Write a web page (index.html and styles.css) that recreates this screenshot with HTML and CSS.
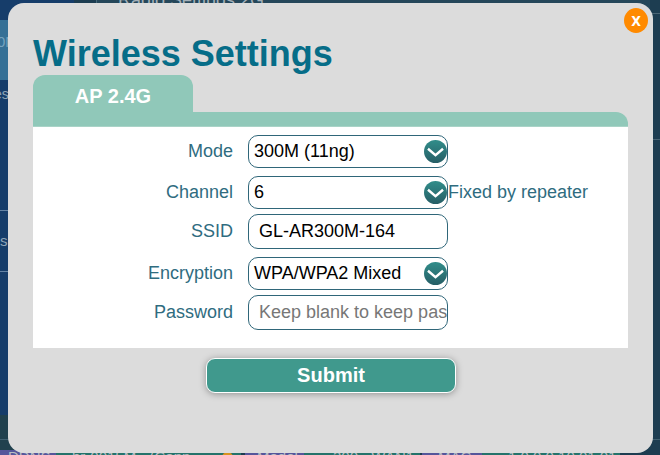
FILE: index.html
```html
<!DOCTYPE html>
<html lang="en">
<head>
<meta charset="utf-8">
<title>Wireless Settings</title>
<link rel="stylesheet" href="styles.css">
</head>
<body>
<div class="page">
  <div class="main">
    <nav class="sidebar">
      <div class="nav-gap"></div>
      <div class="nav-item active">0N</div>
      <div class="nav-item tall">es</div>
      <div class="nav-item ruled">s</div>
    </nav>
    <div class="radio"><span>Radio Settings 2G</span></div>
    <div class="rail"><i></i><i></i><i></i></div>
  </div>
  <div class="spacer"></div>
  <footer class="status">
    <span class="tag first">DDNS</span><span class="value connection">br-0015M - (Conn</span><span class="dot-cell"><i class="dot"></i></span>
    <span class="tag model">Model</span><span class="value device">300 - WAN1</span>
    <span class="tag mac">MAC</span><span class="value address">1.0.0.0 10.01.01</span>
  </footer>
</div>

<section class="modal">
  <button class="close" type="button">X</button>
  <h1>Wireless Settings</h1>
  <div class="tab">AP 2.4G</div>
  <div class="tab-bar"></div>
  <form class="panel">
    <div class="row"><span class="label">Mode</span><div class="field select">300M (11ng)<svg class="arrow" viewBox="0 0 22 22"><use href="#chevron"/></svg></div></div>
    <div class="row channel"><span class="label">Channel</span><div class="field select">6<svg class="arrow" viewBox="0 0 22 22"><use href="#chevron"/></svg></div><span class="note">Fixed by repeater</span></div>
    <div class="row text-row"><span class="label">SSID</span><div class="field text">GL-AR300M-164</div></div>
    <div class="row encryption"><span class="label">Encryption</span><div class="field select">WPA/WPA2 Mixed<svg class="arrow" viewBox="0 0 22 22"><use href="#chevron"/></svg></div></div>
    <div class="row text-row"><span class="label">Password</span><div class="field text placeholder">Keep blank to keep password</div></div>
  </form>
  <button class="submit" type="button">Submit</button>
</section>

<svg class="defs" width="0" height="0">
  <defs>
    <linearGradient id="disc" x1="0" y1="0" x2="0" y2="1"><stop offset="0" stop-color="#318d8a"/><stop offset="1" stop-color="#265e66"/></linearGradient>
    <symbol id="chevron" viewBox="0 0 22 22"><circle cx="11" cy="11" r="11" fill="url(#disc)"/><path d="M3.8 8.4L11 14.6L18.2 8.4" fill="none" stroke="#fff" stroke-width="2.3"/></symbol>
  </defs>
</svg>
</body>
</html>
```
FILE: styles.css
```css
* { box-sizing: border-box; }
body {
  margin: 0;
  height: 455px;
  overflow: hidden;
  font-family: "Liberation Sans", Arial, sans-serif;
  background: #1d3d51;
}
.page { height: 455px; display: flex; flex-direction: column; overflow: hidden; }
.main { height: 415px; display: flex; }
.sidebar { width: 74px; background: #163d6a; color: #8fa5b8; font-size: 15px; overflow: hidden; }
.nav-gap { height: 20px; }
.nav-item { height: 60px; padding-top: 13px; text-indent: 0; }
.nav-item.active { background: #357096; color: #76a3bf; text-indent: -3px; }
.nav-item.tall { height: 130px; padding-top: 6px; font-size: 14px; text-indent: -6px; }
.nav-item.ruled { height: 62px; padding-top: 21px; border-top: 1px solid #6584a5; border-bottom: 1px solid #6584a5; }
.radio {
  flex: 1;
  margin-left: 22px;
  padding-left: 21px;
  border-left: 1px solid #47697a;
  background: #25475a;
  color: #a3b0b8;
  font-size: 18px;
  line-height: 20px;
}
.radio span { display: block; margin-top: -10px; }
.rail { width: 10px; padding-top: 13px; background: #1d3d51; }
.rail i { display: block; height: 126px; border-top: 1px solid #4a6575; }
.rail i:last-child { margin-top: 158px; height: 1px; }
.spacer { height: 35px; background: linear-gradient(#416171, #416171) 0 24px / 100% 1px no-repeat, linear-gradient(90deg, #21414e 40%, #1d3d51); }
.status { height: 5px; flex-shrink: 0; display: flex; overflow: hidden; font-size: 15px; line-height: 13px; color: #b8bec3; white-space: nowrap; background: #1d3d51; }
.tag, .value { overflow: hidden; flex-shrink: 0; padding-left: 8px; }
.tag { background: #55569b; }
.value { background: #25736b; }
.first { width: 56px; }
.connection { width: 164px; padding-left: 16px; }
.dot-cell { width: 21px; height: 5px; overflow: hidden; background: #25736b; }
.dot { display: block; width: 11px; height: 11px; margin: 2px 0 0 2px; border-radius: 50%; background: #d7921e; }
.model { width: 59px; margin-left: 4px; padding-left: 12px; }
.device { width: 116px; padding-left: 29px; }
.mac { width: 60px; margin-left: 2px; padding-left: 16px; }
.address { width: 138px; padding-left: 26px; }
.modal {
  position: absolute;
  left: 8px;
  top: 3px;
  width: 645px;
  height: 450px;
  padding: 29px 25px 0;
  border-radius: 16px;
  background: #dcdcdc;
}
.close {
  position: absolute;
  top: 5px;
  right: 5px;
  width: 24px;
  height: 25px;
  padding: 0;
  border: 0;
  border-radius: 50%;
  background: #ff8a00;
  color: #fff;
  font: bold 14px/24px "DejaVu Sans Condensed", "DejaVu Sans", sans-serif;
}
h1 { height: 43px; margin: 0; color: #066d88; font-size: 36px; line-height: 43px; white-space: nowrap; }
.tab { width: 160px; height: 37px; border-radius: 12px 12px 0 0; background: #90c8b9; color: #fff; font-weight: bold; font-size: 20px; line-height: 42px; text-align: center; }
.tab-bar { height: 15px; border-radius: 0 12px 0 0; background: #90c8b9; border-bottom: 1px solid #a9d3c7; }
.panel { height: 221px; padding-top: 8px; background: #fff; color: #2f6c7f; font-size: 18px; }
.row { height: 33px; display: flex; align-items: center; }
.text-row { height: 35px; }
.channel { margin-top: 8px; }
.channel + .text-row { margin-top: 5px; }
.encryption { margin-top: 8px; }
.encryption + .text-row { margin-top: 5px; }
.label { width: 200px; margin-right: 15px; text-align: right; }
.field { width: 200px; height: 100%; border: 1px solid #2f6679; border-radius: 10px; display: flex; align-items: center; color: #000; white-space: nowrap; overflow: hidden; padding-left: 5px; }
.text { padding-left: 10px; }
.placeholder { color: #777; }
.arrow { width: 23px; height: 23px; margin: 0 0 0 auto; flex-shrink: 0; }
.submit {
  display: block;
  width: 250px;
  height: 35px;
  margin: 10px 0 0 173px;
  padding: 0;
  border: 1px solid #fff;
  border-radius: 9px;
  background: #40998d;
  box-shadow: 0 1px 7px rgba(0, 0, 0, .35);
  color: #fff;
  font: bold 20px/33px "Liberation Sans", Arial, sans-serif;
}
.defs { position: absolute; }
```
